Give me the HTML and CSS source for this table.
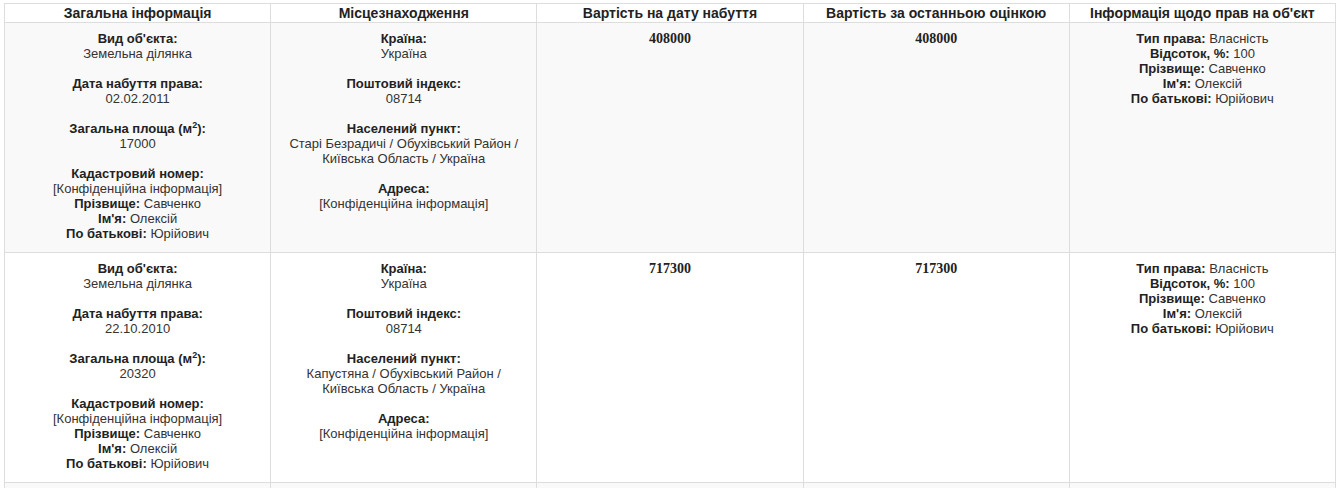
FILE: index.html
```html
<!DOCTYPE html>
<html lang="uk">
<head>
<meta charset="utf-8">
<link rel="stylesheet" href="styles.css">
</head>
<body>
<table class="assets">
  <thead>
    <tr>
      <th>Загальна інформація</th>
      <th>Місцезнаходження</th>
      <th>Вартість на дату набуття</th>
      <th>Вартість за останньою оцінкою</th>
      <th>Інформація щодо прав на об'єкт</th>
    </tr>
  </thead>
  <tbody>
    <tr>
      <td>
        <div class="block"><b>Вид об'єкта:</b><br>Земельна ділянка</div>
        <div class="block"><b>Дата набуття права:</b><br>02.02.2011</div>
        <div class="block"><b>Загальна площа (м<sup>2</sup>):</b><br>17000</div>
        <div class="block"><b>Кадастровий номер:</b><br>[Конфіденційна інформація]<br><b>Прізвище:</b> Савченко<br><b>Ім'я:</b> Олексій<br><b>По батькові:</b> Юрійович</div>
      </td>
      <td>
        <div class="block"><b>Країна:</b><br>Україна</div>
        <div class="block"><b>Поштовий індекс:</b><br>08714</div>
        <div class="block"><b>Населений пункт:</b><br>Старі Безрадичі / Обухівський Район /<br>Київська Область / Україна</div>
        <div class="block"><b>Адреса:</b><br>[Конфіденційна інформація]</div>
      </td>
      <td class="num">408000</td>
      <td class="num">408000</td>
      <td>
        <div class="block"><b>Тип права:</b> Власність<br><b>Відсоток, %:</b> 100<br><b>Прізвище:</b> Савченко<br><b>Ім'я:</b> Олексій<br><b>По батькові:</b> Юрійович</div>
      </td>
    </tr>
    <tr>
      <td>
        <div class="block"><b>Вид об'єкта:</b><br>Земельна ділянка</div>
        <div class="block"><b>Дата набуття права:</b><br>22.10.2010</div>
        <div class="block"><b>Загальна площа (м<sup>2</sup>):</b><br>20320</div>
        <div class="block"><b>Кадастровий номер:</b><br>[Конфіденційна інформація]<br><b>Прізвище:</b> Савченко<br><b>Ім'я:</b> Олексій<br><b>По батькові:</b> Юрійович</div>
      </td>
      <td>
        <div class="block"><b>Країна:</b><br>Україна</div>
        <div class="block"><b>Поштовий індекс:</b><br>08714</div>
        <div class="block"><b>Населений пункт:</b><br>Капустяна / Обухівський Район /<br>Київська Область / Україна</div>
        <div class="block"><b>Адреса:</b><br>[Конфіденційна інформація]</div>
      </td>
      <td class="num">717300</td>
      <td class="num">717300</td>
      <td>
        <div class="block"><b>Тип права:</b> Власність<br><b>Відсоток, %:</b> 100<br><b>Прізвище:</b> Савченко<br><b>Ім'я:</b> Олексій<br><b>По батькові:</b> Юрійович</div>
      </td>
    </tr>
    <tr class="next">
      <td></td>
      <td></td>
      <td></td>
      <td></td>
      <td></td>
    </tr>
  </tbody>
</table>
</body>
</html>
```

FILE: styles.css
```css
html, body {
  margin: 0;
  padding: 0;
  background: #fff;
}
body {
  font-family: "Liberation Sans", Arial, sans-serif;
  font-size: 13px;
  color: #333;
}
.assets {
  border-collapse: collapse;
  table-layout: fixed;
  width: 1332px;
  margin: 3px 0 0 4px;
}
.assets th,
.assets td {
  border: 1px solid #ddd;
  text-align: center;
  vertical-align: top;
}
.assets th {
  font-size: 14px;
  font-weight: bold;
  color: #222;
  line-height: 16px;
  padding: 1px 6px 1px;
  white-space: nowrap;
}
.assets td {
  line-height: 15px;
  padding: 8px 8px 11px;
}
.assets tbody tr:nth-child(odd) td {
  background: #f9f9f9;
}
.assets tr.next td {
  height: 20px;
  padding: 0;
}
.assets b {
  color: #222;
}
.block + .block {
  margin-top: 15px;
}
.assets sup {
  font-size: 9px;
  line-height: 0;
  vertical-align: 5px;
}
.assets td.num {
  font-family: "Liberation Serif", "Times New Roman", serif;
  font-size: 14px;
  font-weight: bold;
  color: #222;
}
```
